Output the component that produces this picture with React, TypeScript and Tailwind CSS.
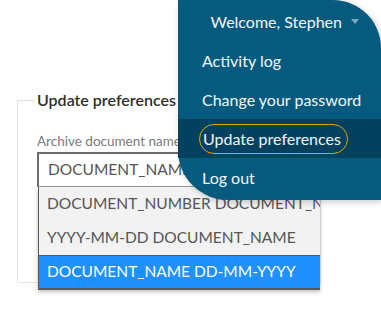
import { useState } from "react";

// ── Archive name formats ──────────────────────────────────────────────────────
const FORMATS = [
  "DOCUMENT_NUMBER DOCUMENT_NAME",
  "YYYY-MM-DD DOCUMENT_NAME",
  "DOCUMENT_NAME DD-MM-YYYY",
];

const MENU = ["Activity log", "Change your password", "Update preferences", "Log out"];

export default function App() {
  const [selected] = useState(2);

  return (
    <div
      className="relative w-[381px] h-[325px] overflow-hidden bg-white"
      style={{ fontFamily: "Lato, 'Open Sans', sans-serif" }}
    >
      {/* Preferences form */}
      <fieldset className="ml-[17px] mt-[90px] w-[300px] border border-[#e3e3e3] pl-[19px] pb-[95px]">
        <legend className="-ml-[1px] pr-1 pl-[1px] text-[16px] leading-[20px] text-[#2e2e2e] font-semibold">
          Update preferences
        </legend>
        <label className="mt-[23px] block text-[13.5px] leading-[16px] text-[#7a7a7a] whitespace-nowrap">
          Archive document name format
        </label>
        <div className="relative mt-[3px] w-[283px]">
          <div className="h-[35px] flex items-center pl-[9px] bg-white border border-[#9a9a9a] border-t-2 border-l-2 border-t-[#6b6b6b] border-l-[#6b6b6b] text-[15.5px] text-[#555] whitespace-nowrap overflow-hidden">
            DOCUMENT_NAME DD-MM-YYYY
          </div>

          {/* Open dropdown list */}
          <ul className="absolute top-full left-[1px] w-[282px] bg-[#f2f2f2] border-l border-b-2 border-[#5a5a5a] shadow-[0_2px_4px_rgba(0,0,0,0.25)] overflow-hidden">
            {FORMATS.map((f, i) => (
              <li
                key={f}
                className={
                  i === selected
                    ? "h-[33px] flex items-center pl-[8px] bg-[#1e90ff] text-white text-[15.5px] whitespace-nowrap border-t border-[#5a5a5a]"
                    : "h-[34px] flex items-center pl-[8px] text-[#555] text-[15.5px] whitespace-nowrap"
                }
              >
                {f}
              </li>
            ))}
          </ul>
        </div>
      </fieldset>

      {/* User menu */}
      <div className="absolute left-[178px] top-0 w-[203px] h-[200px] bg-[#065a7e] rounded-tr-[48px] rounded-bl-[50px] pt-[2px] text-[16px] text-[#f2f6f8] shadow-[2px_2px_6px_rgba(0,0,0,0.2)]">
        <div className="h-[39px] flex items-center justify-end pr-[22px] gap-[9px]">
          <span>Welcome, Stephen</span>
          <svg width="8" height="5" viewBox="0 0 8 5">
            <path d="M0 0h8L4 5z" fill="#7fa6ba" />
          </svg>
        </div>
        {MENU.map((m) => (
          <div
            key={m}
            className={
              m === "Update preferences"
                ? "h-[39px] flex items-center pl-[21px] bg-[#03425f]"
                : "h-[39px] flex items-center pl-[24px]"
            }
          >
            {m === "Update preferences" ? (
              <span className="h-[30px] flex items-center px-[3px] pr-[6px] rounded-full border-[1.5px] border-[#e3a600]">
                {m}
              </span>
            ) : (
              m
            )}
          </div>
        ))}
      </div>
    </div>
  );
}
